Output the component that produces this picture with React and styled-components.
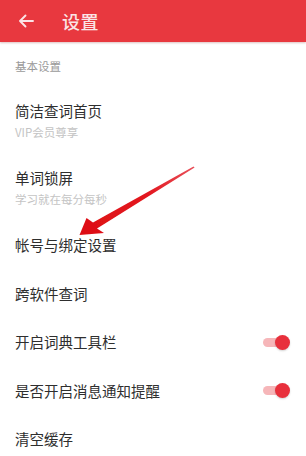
import React from "react";
import styled, { createGlobalStyle } from "styled-components";

const Global = createGlobalStyle`
  html, body { margin: 0; padding: 0; background: #fff; }
  body { font-family: "Noto Sans CJK SC", "Noto Sans", sans-serif; }
`;

const Page = styled.div`
  position: relative;
  width: 306px;
  height: 456px;
  overflow: hidden;
  background: #fff;
`;

const Header = styled.header`
  height: 42px;
  background: #e8383f;
  display: flex;
  align-items: center;
  padding-left: 18px;
  gap: 28px;
  box-shadow: 0 1px 2px rgba(120, 0, 0, 0.25);
  position: relative;
  z-index: 1;
`;

const Title = styled.h1`
  margin: 0;
  font-size: 18px;
  font-weight: 500;
  color: #fbe4e6;
  line-height: 22px;
  letter-spacing: 0.5px;
`;

const SectionLabel = styled.div`
  padding: 17px 15px 14px;
  font-size: 11.5px;
  line-height: 14px;
  color: #9a9a9a;
`;

const Item = styled.div`
  display: flex;
  align-items: center;
  justify-content: space-between;
  padding: 14px 16px 14px 15px;
  height: ${(p) => (p.$tall ? 39 : 20.5)}px;
`;

const Texts = styled.div`
  display: flex;
  flex-direction: column;
  gap: 3px;
`;

const ItemTitle = styled.div`
  font-size: 14.5px;
  line-height: 20px;
  color: #2e2e2e;
`;

const ItemSub = styled.div`
  font-size: 11.5px;
  line-height: 16px;
  color: #c4c4c4;
`;

const Toggle = styled.div`
  position: relative;
  width: 27px;
  height: 15px;
  display: flex;
  align-items: center;
`;

const Track = styled.div`
  width: 21px;
  height: 9px;
  border-radius: 5px;
  background: #f5a9ad;
  opacity: 0.85;
`;

const Knob = styled.div`
  position: absolute;
  right: 0;
  top: 0;
  width: 15px;
  height: 15px;
  border-radius: 50%;
  background: #e8303c;
  box-shadow: 0 1px 2px rgba(0, 0, 0, 0.18);
`;

const Annotation = styled.svg`
  position: absolute;
  left: 0;
  top: 0;
  pointer-events: none;
`;

const BackIcon = () => (
  <svg width="16" height="16" viewBox="0 0 16 16" fill="none">
    <path
      d="M15 8H2M7.5 2.5L2 8l5.5 5.5"
      stroke="#fbe4e6"
      strokeWidth="1.9"
      strokeLinecap="round"
      strokeLinejoin="round"
    />
  </svg>
);

const Switch = () => (
  <Toggle>
    <Track />
    <Knob />
  </Toggle>
);

const items = [
  { title: "简洁查词首页", sub: "VIP会员尊享" },
  { title: "单词锁屏", sub: "学习就在每分每秒" },
  { title: "帐号与绑定设置" },
  { title: "跨软件查词" },
  { title: "开启词典工具栏", toggle: true },
  { title: "是否开启消息通知提醒", toggle: true },
  { title: "清空缓存" },
];

export default function App() {
  return (
    <Page>
      <Global />
      <Header>
        <BackIcon />
        <Title>设置</Title>
      </Header>
      <SectionLabel>基本设置</SectionLabel>
      {items.map((it) => (
        <Item key={it.title} $tall={!!it.sub}>
          <Texts>
            <ItemTitle>{it.title}</ItemTitle>
            {it.sub && <ItemSub>{it.sub}</ItemSub>}
          </Texts>
          {it.toggle && <Switch />}
        </Item>
      ))}
      <Annotation width="306" height="456" viewBox="0 0 306 456">
        <defs>
          <filter id="soft" x="-10%" y="-10%" width="120%" height="120%">
            <feGaussianBlur stdDeviation="0.5" />
          </filter>
          <linearGradient id="arrowGrad" x1="194" y1="167" x2="80" y2="234" gradientUnits="userSpaceOnUse">
            <stop offset="0" stopColor="#e8505a" />
            <stop offset="0.4" stopColor="#e31820" />
            <stop offset="1" stopColor="#dd0f15" />
          </linearGradient>
        </defs>
        <polygon
          points="193.5,166.5 194.6,167.6 97,228.6 104,233 79.5,235 86.5,218 93,222.6"
          fill="url(#arrowGrad)"
          filter="url(#soft)"
        />
      </Annotation>
    </Page>
  );
}
